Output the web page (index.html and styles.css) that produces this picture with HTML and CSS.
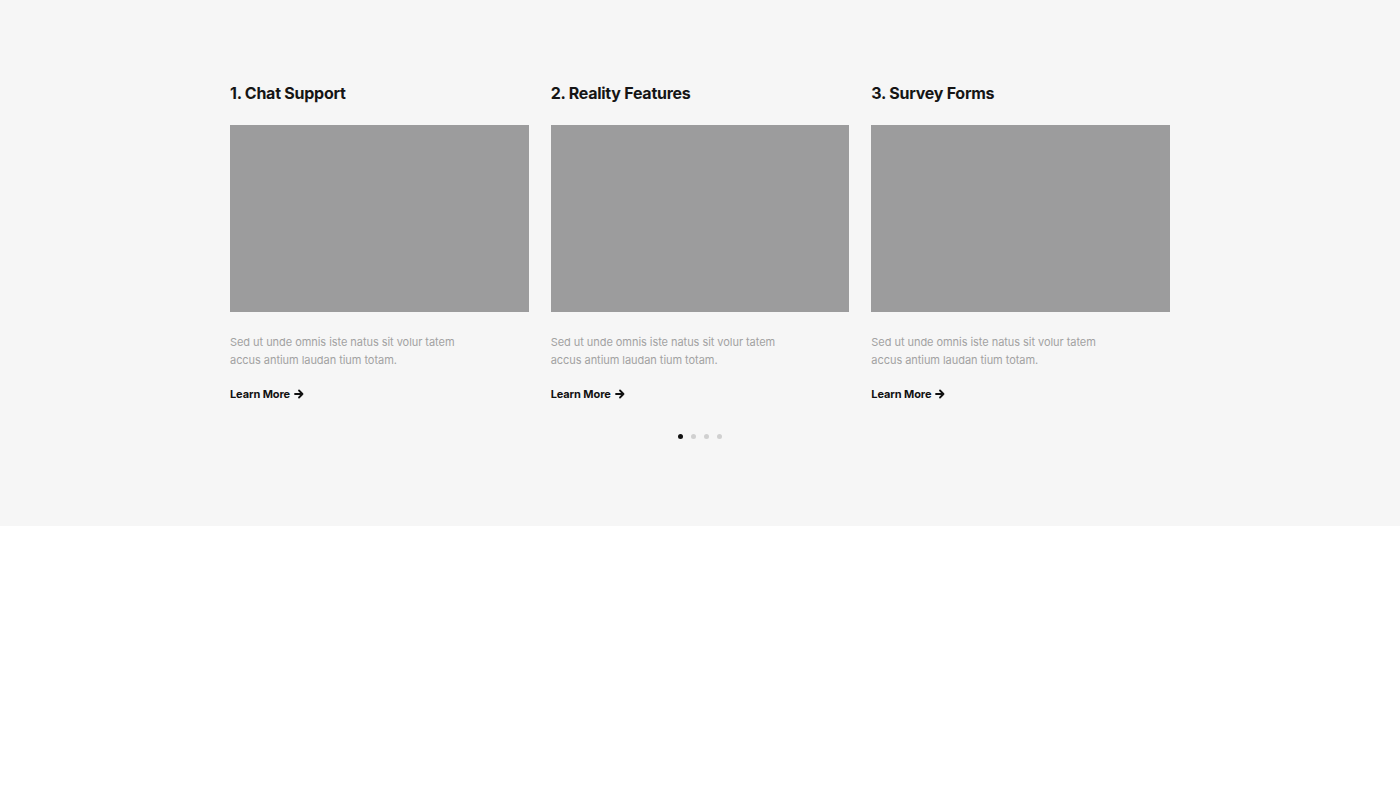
FILE: index.html
```html
<!DOCTYPE html>
<html>
<head>
<meta charset="utf-8">
<link rel="stylesheet" href="styles.css">
</head>
<body>
<section class="features">
  <div class="cards">
    <div class="card">
      <h3 class="title">1. Chat Support</h3>
      <div class="thumb"></div>
      <p class="desc">Sed ut unde omnis iste natus sit volur tatem<br>accus antium laudan tium totam.</p>
      <a class="more" href="#">Learn More <svg width="10" height="10" viewBox="0 0 10 10"><path d="M1 5h7.5M5 1.5L8.5 5 5 8.5" fill="none" stroke="#111" stroke-width="1.8" stroke-linecap="round" stroke-linejoin="round"/></svg></a>
    </div>
    <div class="card">
      <h3 class="title">2. Reality Features</h3>
      <div class="thumb"></div>
      <p class="desc">Sed ut unde omnis iste natus sit volur tatem<br>accus antium laudan tium totam.</p>
      <a class="more" href="#">Learn More <svg width="10" height="10" viewBox="0 0 10 10"><path d="M1 5h7.5M5 1.5L8.5 5 5 8.5" fill="none" stroke="#111" stroke-width="1.8" stroke-linecap="round" stroke-linejoin="round"/></svg></a>
    </div>
    <div class="card">
      <h3 class="title">3. Survey Forms</h3>
      <div class="thumb"></div>
      <p class="desc">Sed ut unde omnis iste natus sit volur tatem<br>accus antium laudan tium totam.</p>
      <a class="more" href="#">Learn More <svg width="10" height="10" viewBox="0 0 10 10"><path d="M1 5h7.5M5 1.5L8.5 5 5 8.5" fill="none" stroke="#111" stroke-width="1.8" stroke-linecap="round" stroke-linejoin="round"/></svg></a>
    </div>
  </div>
  <div class="dots">
    <span class="dot active"></span>
    <span class="dot"></span>
    <span class="dot"></span>
    <span class="dot"></span>
  </div>
</section>
</body>
</html>
```

FILE: styles.css
```css
* { box-sizing: border-box; }
html, body { margin: 0; padding: 0; background: #fff; }
body { font-family: Inter, "Noto Sans", sans-serif; color: #111; }
.features {
  background: #f6f6f6;
  height: 526px;
  padding-top: 82px;
}
.cards {
  width: 940px;
  margin: 0 auto;
  display: grid;
  grid-template-columns: repeat(3, 1fr);
  gap: 22px;
}
.card { display: flex; flex-direction: column; }
.title {
  margin: 0;
  font-size: 16px;
  line-height: 22px;
  font-weight: 700;
  letter-spacing: -0.25px;
  color: #151515;
}
.thumb {
  margin-top: 21px;
  height: 187px;
  background: #9c9c9d;
}
.desc {
  margin: 21px 0 0;
  font-size: 11px;
  line-height: 18px;
  color: #a2a2a2;
  letter-spacing: -0.05px;
}
.more {
  margin-top: 17px;
  display: inline-flex;
  align-items: center;
  gap: 4px;
  font-size: 11px;
  font-weight: 700;
  letter-spacing: -0.1px;
  color: #111;
  text-decoration: none;
  line-height: 16px;
  align-self: flex-start;
}
.dots {
  display: flex;
  justify-content: center;
  gap: 8px;
  margin-top: 32px;
}
.dot {
  width: 5px;
  height: 5px;
  border-radius: 50%;
  background: #d0d0d0;
}
.dot.active { background: #111; }
```
